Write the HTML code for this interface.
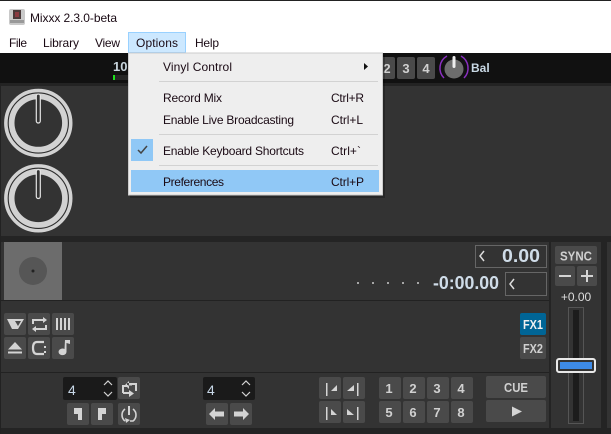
<!DOCTYPE html>
<html>
<head>
<meta charset="utf-8">
<style>
html,body{margin:0;padding:0;background:#333;width:611px;height:434px;overflow:hidden}
svg{display:block}
text{font-family:"Liberation Sans",sans-serif}
.m{font-size:12px;fill:#1a0a14}
.b{fill:#4a4a4a}
.t{font-size:13px;font-weight:bold;fill:#d0d0d0;text-anchor:middle}
.i{fill:#d4d4d4}
.s{fill:none;stroke:#d4d4d4}
</style>
</head>
<body>
<svg width="611" height="434" viewBox="0 0 611 434" xmlns="http://www.w3.org/2000/svg">
<!-- window -->
<rect width="611" height="434" fill="#333"/>
<rect width="611" height="53" fill="#fff"/>
<rect width="611" height="1" fill="#222"/>
<!-- title -->
<rect x="9" y="9" width="16" height="16" rx="2" fill="#c9c9c9"/>
<rect x="13" y="10" width="8" height="9" fill="#4a3a3a"/>
<rect x="15" y="12" width="4" height="5" fill="#8a3a40"/>
<rect x="10" y="20" width="14" height="3" fill="#999"/>
<text x="30" y="22" class="m" textLength="87" lengthAdjust="spacing">Mixxx 2.3.0-beta</text>
<!-- menubar -->
<rect x="128.500" y="32.500" width="57" height="20" fill="#cce8ff" stroke="#99d1ff"/>
<text x="9" y="47" class="m" textLength="18">File</text>
<text x="43" y="47" class="m" textLength="36">Library</text>
<text x="95" y="47" class="m" textLength="25">View</text>
<text x="136" y="47" class="m" textLength="42">Options</text>
<text x="195" y="47" class="m" textLength="24">Help</text>
<!-- header strip -->
<rect x="0" y="53" width="611" height="30" fill="#111"/>
<rect x="0" y="83" width="611" height="3" fill="#232323"/>
<rect x="0" y="83" width="1" height="351" fill="#222"/>
<text x="113" y="71" font-size="13" font-weight="bold" fill="#c8d4dc">10</text>
<rect x="113" y="75" width="16" height="5" fill="#262626"/>
<rect x="113" y="75" width="2" height="5" fill="#1de01d"/>
<!-- header buttons -->
<rect x="375" y="57" width="20" height="22" rx="2" class="b"/>
<rect x="397" y="57" width="18" height="22" rx="2" class="b"/>
<rect x="417" y="57" width="18" height="22" rx="2" class="b"/>
<text x="387" y="73" class="t">2</text>
<text x="406" y="73" class="t">3</text>
<text x="426" y="73" class="t">4</text>
<!-- bal knob -->
<path d="M444 78A14 14 0 0 1 447 56M461 56A14 14 0 0 1 464 78" fill="none" stroke="#8a2fc0" stroke-width="1.500"/>
<circle cx="454" cy="69" r="9.500" fill="#6d6d6d"/>
<rect x="452.500" y="56" width="3" height="12" rx="1.500" fill="#eee"/>
<text x="471" y="72" font-size="12" font-weight="bold" fill="#c8d8e4">Bal</text>
<!-- big knobs -->
<g fill="none">
<circle cx="38.300" cy="123" r="29" stroke="#d2d2d2" stroke-width="10.400"/>
<circle cx="38.300" cy="123" r="30.100" stroke="#2c2c2c" stroke-width="1.100"/>
<rect x="36.300" y="94" width="4" height="29" rx="2" fill="#333" stroke="#e4e4e4" stroke-width="1.200"/>
<circle cx="38.300" cy="198.300" r="29" stroke="#d2d2d2" stroke-width="10.400"/>
<circle cx="38.300" cy="198.300" r="30.100" stroke="#2c2c2c" stroke-width="1.100"/>
<rect x="36.300" y="169.500" width="4" height="29" rx="2" fill="#333" stroke="#e4e4e4" stroke-width="1.200"/>
</g>
<!-- deck separators -->
<rect x="1" y="236" width="610" height="6" fill="#242424"/>
<rect x="1" y="300" width="549" height="1" fill="#222"/>
<rect x="1" y="372" width="549" height="1" fill="#222"/>
<rect x="1" y="428" width="610" height="6" fill="#242424"/>
<rect x="549" y="242" width="2" height="186" fill="#242424"/>
<rect x="601" y="242" width="6" height="186" fill="#242424"/>
<!-- cover -->
<rect x="4" y="242" width="58" height="58" fill="#6c6c6c"/>
<circle cx="33" cy="271" r="14" fill="#565656"/>
<circle cx="33" cy="271" r="1.500" fill="#222"/>
<!-- bpm / time -->
<rect x="475.500" y="245.500" width="71" height="22" fill="none" stroke="#666"/>
<path d="M484 251L480 256L484 261" fill="none" stroke="#ddd" stroke-width="1.500"/>
<text x="502" y="262" font-size="18" font-weight="bold" fill="#cfdce8" textLength="38" lengthAdjust="spacingAndGlyphs">0.00</text>
<g fill="#ccc"><circle cx="358" cy="283" r="1"/><circle cx="373" cy="283" r="1"/><circle cx="388" cy="283" r="1"/><circle cx="403" cy="283" r="1"/><circle cx="418" cy="283" r="1"/></g>
<text x="433" y="289" font-size="18" font-weight="bold" fill="#cfdce8" textLength="66" lengthAdjust="spacingAndGlyphs">-0:00.00</text>
<rect x="505.500" y="272.500" width="41" height="23" fill="none" stroke="#666"/>
<path d="M514 279L510 284L514 289" fill="none" stroke="#ddd" stroke-width="1.500"/>
<!-- sync -->
<rect x="555" y="246" width="42" height="18" rx="2" class="b"/>
<text x="576" y="260.500" class="t" textLength="32" lengthAdjust="spacingAndGlyphs">SYNC</text>
<rect x="555" y="266" width="20" height="20" rx="2" class="b"/>
<rect x="577" y="266" width="20" height="20" rx="2" class="b"/>
<rect x="559" y="275" width="12" height="2" class="i"/>
<rect x="581" y="275" width="12" height="2" class="i"/>
<rect x="586" y="270" width="2" height="12" class="i"/>
<text x="576" y="301" font-size="12" fill="#ddd" text-anchor="middle">+0.00</text>
<!-- rate slider -->
<rect x="568.500" y="307.500" width="15" height="116" fill="#333" stroke="#555"/>
<rect x="573" y="310" width="6" height="111" fill="#1c1c1c"/>
<rect x="557" y="359" width="38" height="13" rx="2" fill="#333" stroke="#e8e8e8" stroke-width="2"/>
<rect x="560" y="362" width="32" height="7" fill="#3d8ae6"/>
<!-- buttons -->
<g class="b">
<rect x="4" y="313" width="22" height="22" rx="2"/><rect x="28" y="313" width="22" height="22" rx="2"/><rect x="52" y="313" width="22" height="22" rx="2"/>
<rect x="4" y="337" width="22" height="22" rx="2"/><rect x="28" y="337" width="22" height="22" rx="2"/><rect x="52" y="337" width="22" height="22" rx="2"/>
<rect x="118" y="377" width="22" height="22" rx="2"/><rect x="67" y="403" width="22" height="22" rx="2"/><rect x="91" y="403" width="22" height="22" rx="2"/><rect x="118" y="403" width="22" height="22" rx="2"/>
<rect x="206" y="403" width="22" height="22" rx="2"/><rect x="230" y="403" width="22" height="22" rx="2"/>
<rect x="319" y="377" width="22" height="22" rx="2"/><rect x="343" y="377" width="22" height="22" rx="2"/><rect x="319" y="401" width="22" height="22" rx="2"/><rect x="343" y="401" width="22" height="22" rx="2"/>
<rect x="379" y="377" width="22" height="22" rx="2"/><rect x="403" y="377" width="22" height="22" rx="2"/><rect x="427" y="377" width="22" height="22" rx="2"/><rect x="451" y="377" width="22" height="22" rx="2"/>
<rect x="379" y="401" width="22" height="22" rx="2"/><rect x="403" y="401" width="22" height="22" rx="2"/><rect x="427" y="401" width="22" height="22" rx="2"/><rect x="451" y="401" width="22" height="22" rx="2"/>
<rect x="486" y="376" width="60" height="22" rx="2"/><rect x="486" y="400" width="60" height="22" rx="2"/>
<rect x="520" y="337" width="26" height="22" rx="2"/>
</g>
<rect x="520" y="313" width="26" height="22" rx="2" fill="#006596"/>
<text x="523" y="329" font-size="13" font-weight="bold" fill="#f0f0f0" textLength="20" lengthAdjust="spacingAndGlyphs">FX1</text>
<text x="523" y="353" font-size="13" font-weight="bold" fill="#d0d0d0" textLength="20" lengthAdjust="spacingAndGlyphs">FX2</text>
<text x="516" y="392" class="t" textLength="24" lengthAdjust="spacingAndGlyphs">CUE</text>
<path d="M512 406.500L522 411.500L512 416.500Z" class="i"/>
<!-- hotcues -->
<g class="t">
<text x="389" y="393">1</text><text x="413" y="393">2</text><text x="437" y="393">3</text><text x="461" y="393">4</text>
<text x="389" y="417">5</text><text x="413" y="417">6</text><text x="437" y="417">7</text><text x="461" y="417">8</text>
</g>
<!-- beatjump icons -->
<g class="i">
<rect x="326" y="383" width="1.500" height="13"/><path d="M337 385V391H331Z"/>
<rect x="357" y="383" width="1.500" height="13"/><path d="M354 385V391H347Z"/>
<rect x="326" y="407" width="1.500" height="13"/><path d="M331 409V415H337Z"/>
<rect x="357" y="407" width="1.500" height="13"/><path d="M347 409V415H354Z"/>
</g>
<!-- row-1 icons -->
<path d="M7 319H24L18 329H12Z" class="i"/><path d="M15 321H21L18 326Z" fill="#4a4a4a"/>
<path d="M33 324V320H43M46 325V329H36" class="s" stroke-width="2"/>
<path d="M43 317L47 320L43 323ZM36 326L32 329L36 332Z" class="i"/>
<g class="i"><rect x="56" y="318" width="2" height="12"/><rect x="60" y="318" width="2" height="12"/><rect x="64" y="318" width="2" height="12"/><rect x="68" y="318" width="2" height="12"/></g>
<path d="M15 342L22 349.500H8Z" class="i"/><rect x="8" y="351.500" width="14" height="2" class="i"/>
<path d="M44 342H37Q33 342 33 348Q33 354 37 354H44" class="s" stroke-width="2.200"/><rect x="44" y="346" width="2" height="2" class="i"/><rect x="44" y="351" width="2" height="2" class="i"/>
<path d="M65 340H70V344L66.500 343V352A4 3.300 0 1 1 64.500 349Z" class="i"/>
<!-- loop controls -->
<rect x="63" y="377" width="54" height="23" rx="2" fill="#1a1a1a"/>
<rect x="203" y="377" width="52" height="23" rx="2" fill="#1a1a1a"/>
<text x="68" y="395" font-size="14" fill="#c8d8e8">4</text>
<text x="207" y="395" font-size="14" fill="#c8d8e8">4</text>
<path d="M104 385L108 381L112 385M104 392L108 396L112 392M242 385L246 381L250 385M242 392L246 396L250 392" class="s" stroke-width="1.200"/>
<path d="M123 393V386H128M136 391V384H131M123 393H130" class="s" stroke-width="2"/>
<path d="M127 383H132V385.500H127ZM129 381L125 385L129 389ZM129 390L134 393.500L129 397Z" class="i"/>
<path d="M74 408H82V420H78V414H74Z" class="i"/>
<path d="M98 408H106V414H102V420H98Z" class="i"/>
<path d="M125 409A7.500 7.500 0 0 0 125 421M133 409A7.500 7.500 0 0 1 133 421H130" class="s" stroke-width="1.600"/><rect x="128" y="406" width="2" height="9" class="i"/><path d="M125 418L130 420L126 423Z" class="i"/>
<path d="M209 414L215 408V411.500H224V416.500H215V420Z" class="i"/>
<path d="M249 414L243 408V411.500H234V416.500H243V420Z" class="i"/>
<!-- menu -->
<rect x="130" y="55" width="255" height="143" fill="#000" opacity=".25"/>
<rect x="128.500" y="53" width="254" height="142" fill="#eee" stroke="#ccc"/>
<rect x="131" y="139" width="22" height="22" fill="#90c8f6"/>
<path d="M138 150L141 153L147 146" fill="none" stroke="#444" stroke-width="1.500"/>
<rect x="131" y="170" width="248" height="22" fill="#90c8f6"/>
<rect x="159" y="81" width="219" height="1" fill="#d2d2d2"/>
<rect x="159" y="134" width="219" height="1" fill="#d2d2d2"/>
<rect x="159" y="165" width="219" height="1" fill="#d2d2d2"/>
<text x="163" y="71" class="m" textLength="69">Vinyl Control</text>
<path d="M364 63L368 66.500L364 70Z" fill="#111"/>
<text x="163" y="102" class="m" textLength="59">Record Mix</text>
<text x="331" y="102" class="m" textLength="33">Ctrl+R</text>
<text x="163" y="124" class="m" textLength="131">Enable Live Broadcasting</text>
<text x="331" y="124" class="m" textLength="32">Ctrl+L</text>
<text x="163" y="155" class="m" textLength="141">Enable Keyboard Shortcuts</text>
<text x="331" y="155" class="m" textLength="30">Ctrl+`</text>
<text x="163" y="186" class="m" textLength="61">Preferences</text>
<text x="331" y="186" class="m" textLength="33">Ctrl+P</text>
</svg>
</body>
</html>
